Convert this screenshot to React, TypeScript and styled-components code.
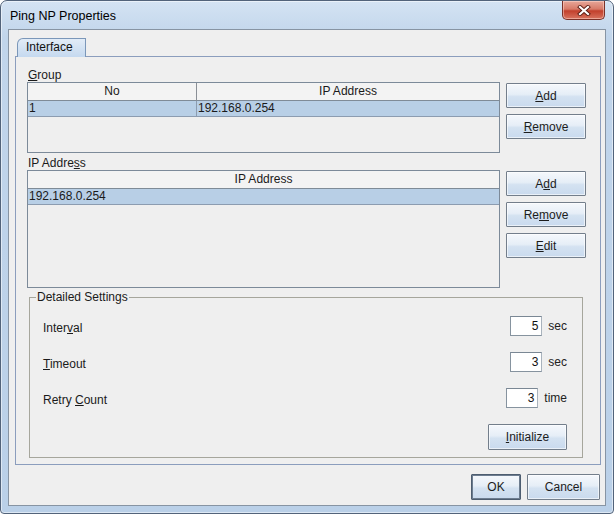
import styled, { createGlobalStyle } from 'styled-components';

const GlobalStyle = createGlobalStyle`
  html, body {
    margin: 0;
    padding: 0;
    background: #ffffff;
  }
  body {
    font-family: "Liberation Sans", Arial, sans-serif;
    font-size: 12px;
    color: #1a1a1a;
  }
  * {
    box-sizing: border-box;
  }
`;

const Window = styled.div`
  width: 614px;
  height: 514px;
  display: flex;
  flex-direction: column;
  border: 1px solid #52637a;
  border-radius: 7px 7px 4px 4px;
  background: linear-gradient(180deg, #d4e3f3 0%, #c1d5eb 36px, #bad0e8 100%);
  box-shadow: inset 0 0 0 1px rgba(255, 255, 255, 0.5);
  padding: 0 7px 7px;
`;

const TitleBar = styled.div`
  height: 28px;
  flex: none;
  display: flex;
  align-items: flex-start;
  justify-content: space-between;
`;

const Title = styled.span`
  margin: 8px 0 0 2px;
  font-size: 12.5px;
  color: #000000;
`;

const CloseButton = styled.div`
  width: 43px;
  height: 19px;
  margin-right: 1px;
  display: flex;
  align-items: center;
  justify-content: center;
  border: 1px solid #7b3128;
  border-top: none;
  border-radius: 0 0 5px 5px;
  background: linear-gradient(180deg, #e7a799 0%, #d77a68 45%, #c2402c 55%, #d8735f 100%);
  box-shadow: inset 0 0 0 1px rgba(255, 220, 210, 0.5);
`;

const Body = styled.div`
  flex: 1;
  display: flex;
  flex-direction: column;
  background: #efefef;
  border: 1px solid #8794a3;
  padding: 8px 4px 5px 6px;
`;

const TabStrip = styled.div`
  display: flex;
  padding-left: 2px;
`;

const Tab = styled.div`
  position: relative;
  z-index: 1;
  width: 69px;
  height: 19px;
  margin-bottom: -1px;
  padding-left: 8px;
  line-height: 17px;
  border: 1px solid #7b97b9;
  border-bottom: none;
  border-top-left-radius: 6px;
  background: linear-gradient(180deg, #e2ecf7 0%, #c5d9ef 100%);
  color: #111111;
`;

const Panel = styled.div`
  flex: 1;
  display: flex;
  flex-direction: column;
  border: 1px solid #8b9dbd;
  padding: 0 14px 6px 11px;
`;

const SectionLabel = styled.div<{ $gap: number }>`
  margin-top: ${(p) => p.$gap}px;
  padding-left: 1px;
  height: 14px;
  line-height: 14px;
`;

const TableRow = styled.div`
  display: flex;
  gap: 6px;
  align-items: flex-start;
`;

const Table = styled.div<{ $height: number }>`
  flex: 1;
  height: ${(p) => p.$height}px;
  border: 1px solid #7c8a99;
  background: #efefef;
`;

const Grid = styled.div<{ $cols: string }>`
  display: grid;
  grid-template-columns: ${(p) => p.$cols};
`;

const HeaderCell = styled.div<{ $last?: boolean }>`
  height: 18px;
  line-height: 17px;
  text-align: center;
  background: #f3f3f3;
  border-bottom: 1px solid #7f8b97;
  border-right: ${(p) => (p.$last ? 'none' : '1px solid #8a8f96')};
`;

const RowCell = styled.div<{ $last?: boolean }>`
  height: 16px;
  line-height: 15px;
  padding-left: 1px;
  background: #b8cfe6;
  border-bottom: 1px solid #8c9cb0;
  border-right: ${(p) => (p.$last ? 'none' : '1px solid #8c9cb0')};
`;

const ButtonColumn = styled.div`
  width: 80px;
  flex: none;
  margin-top: 1px;
  display: flex;
  flex-direction: column;
  gap: 6px;
`;

const Button = styled.button<{ $width?: number; $height?: number; $default?: boolean }>`
  width: ${(p) => (p.$width ? `${p.$width}px` : '100%')};
  height: ${(p) => p.$height ?? 25}px;
  padding: 0;
  font-family: "Liberation Sans", Arial, sans-serif;
  font-size: 12px;
  color: #1c1c1c;
  border: 1px solid ${(p) => (p.$default ? '#4d5d70' : '#737e8b')};
  box-shadow: ${(p) =>
    p.$default ? 'inset 0 0 0 1px #6d7d90' : 'inset 0 0 0 1px rgba(255, 255, 255, 0.6)'};
  border-radius: 1px;
  background: linear-gradient(180deg, #f5f8fc 0%, #e6eef7 45%, #d4e2f1 55%, #c9daee 100%);
`;

const Fieldset = styled.fieldset`
  margin: 2px 3px 0 2px;
  padding: 0;
  min-width: 0;
  border: 1px solid #a6a69c;
`;

const Legend = styled.legend`
  margin-left: 6px;
  padding: 0 1px;
  line-height: 14px;
  color: #1a1a1a;
`;

const SettingsBody = styled.div`
  display: flex;
  flex-direction: column;
  gap: 16px;
  padding: 12px 15px 7px 13px;
`;

const SettingRow = styled.div`
  height: 20px;
  display: flex;
  align-items: center;
  justify-content: space-between;
`;

const SettingLabel = styled.span`
  padding-top: 4px;
`;

const ValueGroup = styled.div`
  display: flex;
  align-items: center;
  gap: 6px;
`;

const NumberBox = styled.div`
  width: 32px;
  height: 20px;
  padding-right: 3px;
  line-height: 18px;
  text-align: right;
  background: #ffffff;
  border: 1px solid #86939f;
  border-top-color: #7a8794;
  border-right-color: #a9b3bd;
  color: #111111;
`;

const Unit = styled.span`
  color: #222222;
`;

const RightAligned = styled.div`
  display: flex;
  justify-content: flex-end;
`;

const Footer = styled.div`
  display: flex;
  justify-content: flex-end;
  gap: 6px;
  margin-top: 9px;
  padding-right: 1px;
`;

const CloseGlyph = () => (
  <svg width="14" height="11" viewBox="0 0 14 11">
    <path d="M3 2 L11 9 M11 2 L3 9" stroke="#5b1d14" strokeWidth="4" strokeLinecap="square" />
    <path d="M3 2 L11 9 M11 2 L3 9" stroke="#ffffff" strokeWidth="2.2" strokeLinecap="square" />
  </svg>
);

const settings = [
  { label: <>Inter<u>v</u>al</>, value: '5', unit: 'sec' },
  { label: <><u>T</u>imeout</>, value: '3', unit: 'sec' },
  { label: <>Retry <u>C</u>ount</>, value: '3', unit: 'time' },
];

export default function App() {
  return (
    <>
      <GlobalStyle />
      <Window>
        <TitleBar>
          <Title>Ping NP Properties</Title>
          <CloseButton>
            <CloseGlyph />
          </CloseButton>
        </TitleBar>
        <Body>
          <TabStrip>
            <Tab>Interface</Tab>
          </TabStrip>
          <Panel>
            <SectionLabel $gap={11}>
              <u>G</u>roup
            </SectionLabel>
            <TableRow>
              <Table $height={71}>
                <Grid $cols="169px 1fr">
                  <HeaderCell>No</HeaderCell>
                  <HeaderCell $last>IP Address</HeaderCell>
                  <RowCell>1</RowCell>
                  <RowCell $last>192.168.0.254</RowCell>
                </Grid>
              </Table>
              <ButtonColumn>
                <Button>
                  <u>A</u>dd
                </Button>
                <Button>
                  <u>R</u>emove
                </Button>
              </ButtonColumn>
            </TableRow>

            <SectionLabel $gap={3}>
              IP Addre<u>s</u>s
            </SectionLabel>
            <TableRow>
              <Table $height={118}>
                <Grid $cols="1fr">
                  <HeaderCell $last>IP Address</HeaderCell>
                  <RowCell $last>192.168.0.254</RowCell>
                </Grid>
              </Table>
              <ButtonColumn>
                <Button>
                  A<u>d</u>d
                </Button>
                <Button>
                  Re<u>m</u>ove
                </Button>
                <Button>
                  <u>E</u>dit
                </Button>
              </ButtonColumn>
            </TableRow>

            <Fieldset>
              <Legend>Detailed Settings</Legend>
              <SettingsBody>
                {settings.map((s, i) => (
                  <SettingRow key={i}>
                    <SettingLabel>{s.label}</SettingLabel>
                    <ValueGroup>
                      <NumberBox>{s.value}</NumberBox>
                      <Unit>{s.unit}</Unit>
                    </ValueGroup>
                  </SettingRow>
                ))}
                <RightAligned>
                  <Button $width={79} $height={26}>
                    <u>I</u>nitialize
                  </Button>
                </RightAligned>
              </SettingsBody>
            </Fieldset>
          </Panel>
          <Footer>
            <Button $width={50} $height={26} $default>
              OK
            </Button>
            <Button $width={73} $height={26}>
              Cancel
            </Button>
          </Footer>
        </Body>
      </Window>
    </>
  );
}
